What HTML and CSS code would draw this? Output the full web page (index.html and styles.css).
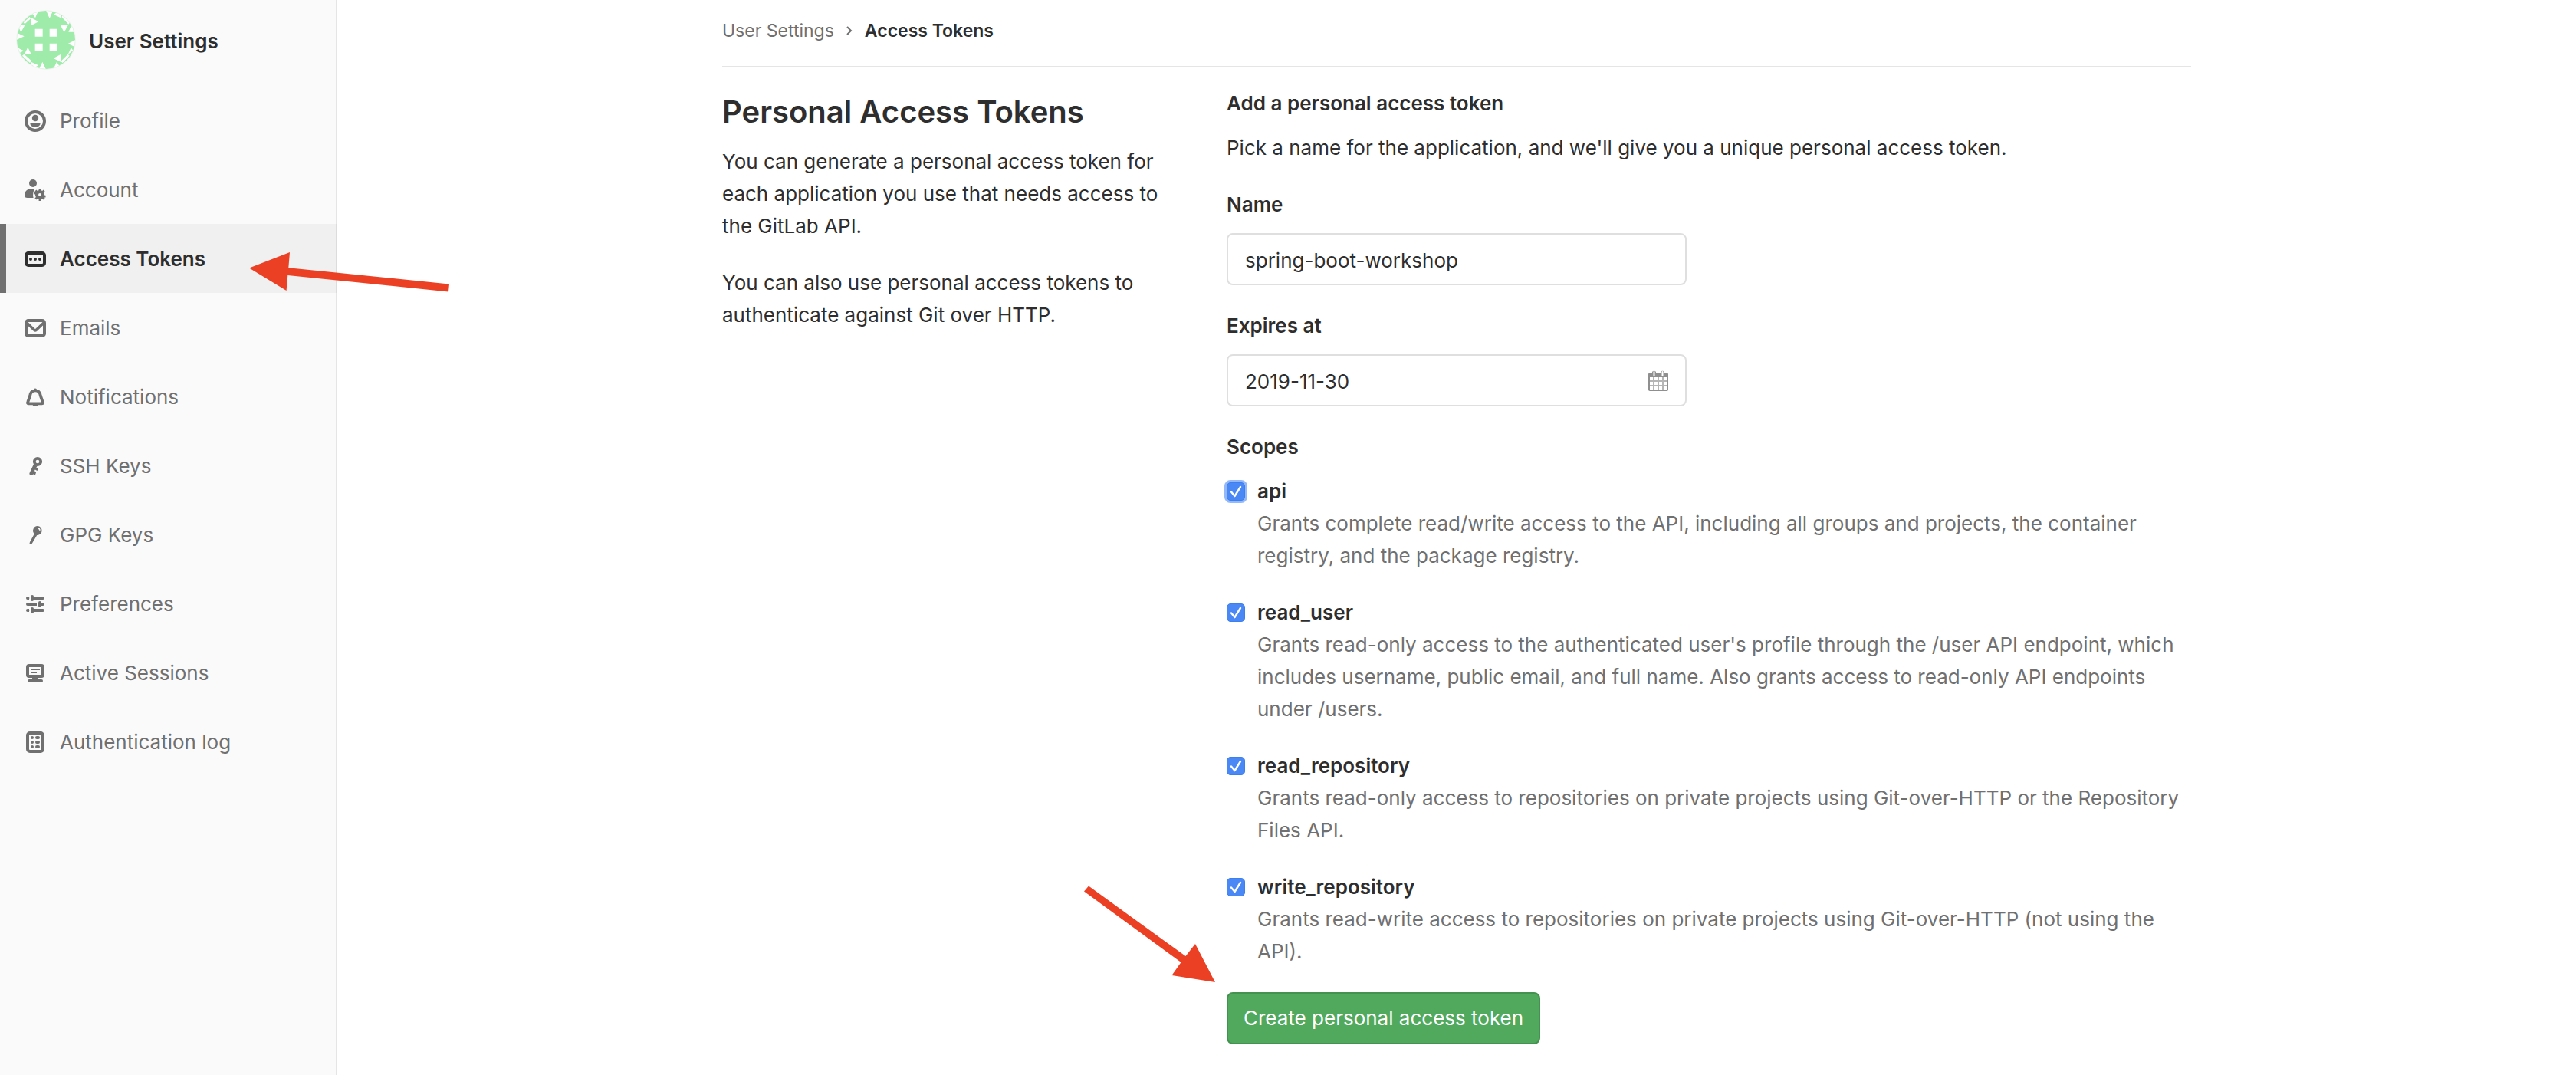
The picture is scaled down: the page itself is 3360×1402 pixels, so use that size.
FILE: index.html
```html
<!DOCTYPE html>
<html lang="en">
<head>
<meta charset="utf-8">
<meta name="viewport" content="width=device-width, initial-scale=1">
<title>Access Tokens · User Settings · GitLab</title>
<link rel="stylesheet" href="styles.css">
</head>
<body>
<div class="layout">
  <aside class="sidebar">
    <a class="sidebar-header" href="#">
      <svg class="avatar" viewBox="60 36 240 240" aria-hidden="true">
        <defs><clipPath id="avatar-clip"><circle cx="180" cy="156" r="114"/></clipPath></defs>
        <circle cx="180" cy="156" r="117" fill="#f2f2f2"/>
        <g clip-path="url(#avatar-clip)">
          <rect x="60" y="36" width="240" height="240" fill="#9eebaa"/>
          <g fill="#fff">
            <path d="M137 113h30v30h-30zM194 113h30v30h-30zM137 170h30v30h-30zM194 170h30v30h-30z"/>
            <path d="M180 40h28l-14 32zM126 52l26-14-14 32zM123 70l28 15-28 14zM237 99h29l-15 28zM64 127l31 15-31 14zM296 156l-30 15 30 14zM109 185l14 28H95zM237 213v29l-28-14zM152 272l14-30 14 30zM208 272l14-30 16 26z"/>
            <path d="M70 99h27l-15 28zM268 125l12-27 16 27zM64 184l29 15-29 14zM123 243l28 13-28 14zM209 56l29-15v29z"/>
            <path d="M92 88l24-22 5 6-24 22zM241 66l5-5 28 26-6 8zM87 218l7-6 29 26-6 8zM238 240l28-28 6 6-27 28zM266 213l12-26 8 10z"/>
          </g>
        </g>
      </svg>
      <span class="sidebar-title">User Settings</span>
    </a>
    <nav aria-label="User settings">
      <ul class="nav-list">
        <li class="nav-item"><a class="nav-link" href="#">
          <svg class="icon" viewBox="0 0 16 16"><circle cx="8" cy="8" r="6" fill="none" stroke="currentColor" stroke-width="2"/><circle cx="8" cy="6" r="2.1"/><path d="M4.6 9.8C5.300 9.200 6.600 9 8 9s2.700.2 3.400.8C11 11.200 9.600 12 8 12s-3-.8-3.400-2.200z"/></svg>
          <span>Profile</span></a></li>
        <li class="nav-item"><a class="nav-link" href="#">
          <svg class="icon" viewBox="0 0 16 16"><circle cx="6.500" cy="3.500" r="2.500"/><path d="M7.800 7.100C6.700 8.400 6.200 10.900 6.800 13H3c-1.400 0-2-.5-2-1.500C1 8.500 3 7 6 7c.7 0 1.300 0 1.800.1z"/><circle cx="11" cy="11" r="2" fill="none" stroke="currentColor" stroke-width="2"/><path d="M11 7v1.500M11 13.500V15M7.200 9.800l1.400.4M13.400 11.800l1.400.4M8.200 13.800l1-1M12.800 9.200l1-1M13.800 13.800l-1-1M9.200 9.200l-1-1" stroke="currentColor" stroke-width="1.400"/></svg>
          <span>Account</span></a></li>
        <li class="nav-item nav-item-active"><a class="nav-link" href="#" aria-current="page">
          <svg class="icon" viewBox="0 0 16 16"><rect x="2" y="4" width="12" height="8" rx="1.500" fill="none" stroke="currentColor" stroke-width="2"/><circle cx="5" cy="8" r="1"/><circle cx="8" cy="8" r="1"/><circle cx="11" cy="8" r="1"/></svg>
          <span>Access Tokens</span></a>
          <svg class="arrow arrow-nav" viewBox="325 329 261 52" aria-hidden="true"><path d="M325 349.500L378 329l-1.500 20 109.500 21-1 10-210-21z" fill="none"/><path d="M325 349.500L378 329l-1.700 20.200L586 370.500l-1 10L375.300 359l-1.700 20z"/></svg>
        </li>
        <li class="nav-item"><a class="nav-link" href="#">
          <svg class="icon" viewBox="0 0 16 16"><rect x="2" y="3" width="12" height="10" rx="1.500" fill="none" stroke="currentColor" stroke-width="2"/><path d="M2.500 4.500l4.800 4.600c.4.400 1 .4 1.400 0l4.800-4.600" fill="none" stroke="currentColor" stroke-width="1.800"/></svg>
          <span>Emails</span></a></li>
        <li class="nav-item"><a class="nav-link" href="#">
          <svg class="icon" viewBox="0 0 16 16"><path d="M8 3.700C6 3.700 4.900 5 4.600 7L3.200 11c-.4.900-.2 1.200.4 1.200h8.800c.6 0 .8-.3.4-1.200L11.400 7C11.100 5 10 3.700 8 3.700z" fill="none" stroke="currentColor" stroke-width="1.900"/><path d="M7 3.200a1 1 0 0 1 2 0zM6.300 13h3.400c-.3.700-.9 1-1.700 1s-1.400-.3-1.700-1z"/></svg>
          <span>Notifications</span></a></li>
        <li class="nav-item"><a class="nav-link" href="#">
          <svg class="icon" viewBox="0 0 16 16"><circle cx="9.500" cy="5" r="2.100" fill="none" stroke="currentColor" stroke-width="1.900"/><path d="M7 6.600l2.300 1.300-.6 1 .9.600c.5.300.4.700.2 1-.2.400-.6.500-1 .2l-.9-.5-.5.900.7.400c.4.200.5.600.3 1-.2.400-.2 1.200-.8 1.200-.5 0-.4-.5-.9-.5-.4 0-.3.500-.8.500H5c-.7 0-1-.6-.7-1.300z"/></svg>
          <span>SSH Keys</span></a></li>
        <li class="nav-item"><a class="nav-link" href="#">
          <svg class="icon" viewBox="0 0 16 16"><path fill-rule="evenodd" d="M9.500 2a3 3 0 1 1-.4 6L6 13.200c-.5.800-1.400 1-1.600.6-.2-.4-.1-1 .2-1.600l2.800-5.100A3 3 0 0 1 9.500 2zm.4 1.100l-.4.600c.8.200 1.100.6 1.200 1.300l.7-.2c0-.9-.6-1.600-1.500-1.700z"/></svg>
          <span>GPG Keys</span></a></li>
        <li class="nav-item"><a class="nav-link" href="#">
          <svg class="icon" viewBox="0 0 16 16"><path d="M3 4h.2M6 4h7M3 8h5M11 8h2M3 12h.2M6 12h7" stroke="currentColor" stroke-width="2" stroke-linecap="round"/><path d="M3 3h1v2H3zM7 7h2v2H7zM3 11h1v2H3z"/><path d="M6 3v2M11 7v2M6 11v2" stroke="currentColor" stroke-width="2" stroke-linecap="round"/></svg>
          <span>Preferences</span></a></li>
        <li class="nav-item"><a class="nav-link" href="#">
          <svg class="icon" viewBox="0 0 16 16"><rect x="3" y="3" width="10" height="7" rx="1" fill="none" stroke="currentColor" stroke-width="2"/><path d="M6 10.500h4V12h2a1 1 0 0 1 0 2H4a1 1 0 0 1 0-2h2z"/><path d="M5 5.500h6M5 7.500h4" stroke="currentColor"/></svg>
          <span>Active Sessions</span></a></li>
        <li class="nav-item"><a class="nav-link" href="#">
          <svg class="icon" viewBox="0 0 16 16"><rect x="3" y="2" width="10" height="12" rx="1.500" fill="none" stroke="currentColor" stroke-width="2"/><circle cx="6" cy="5" r="1"/><circle cx="6" cy="8" r="1"/><circle cx="6" cy="11" r="1"/><rect x="8" y="4" width="3" height="2" rx="1"/><rect x="8" y="7" width="3" height="2" rx="1"/><rect x="8" y="10" width="3" height="2" rx="1"/></svg>
          <span>Authentication log</span></a></li>
      </ul>
    </nav>
  </aside>

  <main class="content">
    <div class="container">
      <nav class="breadcrumbs" aria-label="Breadcrumb">
        <a class="breadcrumb-link" href="#">User Settings</a>
        <svg class="chevron" viewBox="0 0 8 12" aria-hidden="true"><path d="M1 1l5 5-5 5" fill="none" stroke="currentColor" stroke-width="2"/></svg>
        <a class="breadcrumb-current" href="#">Access Tokens</a>
      </nav>

      <div class="columns">
        <section class="intro">
          <h1 class="page-title">Personal Access Tokens</h1>
          <p class="intro-text">You can generate a personal access token for each application you use that needs access to the GitLab API.</p>
          <p class="intro-text">You can also use personal access tokens to authenticate against Git over HTTP.</p>
        </section>

        <form class="token-form">
          <div class="form-intro">
            <h2 class="form-title">Add a personal access token</h2>
            <p class="form-text">Pick a name for the application, and we'll give you a unique personal access token.</p>
          </div>

          <div class="field">
            <label class="field-label" for="token-name">Name</label>
            <div class="control"><input class="input" id="token-name" type="text" value="spring-boot-workshop"></div>
          </div>

          <div class="field">
            <label class="field-label" for="token-expires">Expires at</label>
            <div class="control">
              <input class="input" id="token-expires" type="text" value="2019-11-30">
              <svg class="calendar" viewBox="0 0 26 28" aria-hidden="true"><path fill="#8f8f8f" fill-rule="evenodd" d="M2 4h3V3a3 3 0 0 1 5 0v1h6V3a3 3 0 0 1 5 0v1h3a2 2 0 0 1 2 2v20a2 2 0 0 1-2 2H2a2 2 0 0 1-2-2V6a2 2 0 0 1 2-2zm4.500-1v5h2V3a1 1 0 0 0-2 0zm11 0v5h2V3a1 1 0 0 0-2 0zM2 10h22v16H2z"/><path stroke="#b5b5b5" stroke-width="2" d="M7 10v16M13 10v16M19 10v16M2 15h22M2 21h22"/></svg>
            </div>
          </div>

          <fieldset class="scopes">
            <legend class="field-label">Scopes</legend>
            <div class="scope-list">
              <div class="scope">
                <input class="checkbox checkbox-focused" type="checkbox" id="scope-api" checked>
                <label class="scope-name" for="scope-api">api</label>
                <p class="scope-text">Grants complete read/write access to the API, including all groups and projects, the container registry, and the package registry.</p>
              </div>
              <div class="scope">
                <input class="checkbox" type="checkbox" id="scope-read-user" checked>
                <label class="scope-name" for="scope-read-user">read_user</label>
                <p class="scope-text">Grants read-only access to the authenticated user's profile through the /user API endpoint, which includes username, public email, and full name. Also grants access to read-only API endpoints under /users.</p>
              </div>
              <div class="scope">
                <input class="checkbox" type="checkbox" id="scope-read-repository" checked>
                <label class="scope-name" for="scope-read-repository">read_repository</label>
                <p class="scope-text">Grants read-only access to repositories on private projects using Git-over-HTTP or the Repository Files API.</p>
              </div>
              <div class="scope">
                <input class="checkbox" type="checkbox" id="scope-write-repository" checked>
                <label class="scope-name" for="scope-write-repository">write_repository</label>
                <p class="scope-text">Grants read-write access to repositories on private projects using Git-over-HTTP (not using the API).</p>
              </div>
            </div>
          </fieldset>

          <div class="actions">
            <button class="button" type="submit">Create personal access token</button>
            <svg class="arrow arrow-submit" viewBox="1414 1155 171 126" aria-hidden="true"><path d="M1420 1155.500l126.500 91.500 12.500-16 26 50-56.500-9 12-17L1414 1162.500z"/></svg>
          </div>
        </form>
      </div>
    </div>
  </main>
</div>
</body>
</html>
```
FILE: styles.css
```css
:root {
  --text: #2e2e2e;
  --muted: #707070;
  --line: #e5e5e5;
  --control-line: #dfdfdf;
  --annotation: #ec4025;
}

*,
*::before,
*::after {
  box-sizing: border-box;
}

body {
  margin: 0;
  background: #fff;
  color: var(--text);
  font: 400 26px/42px Inter, "Liberation Sans", sans-serif;
}

h1,
h2,
p,
ul {
  margin: 0;
  padding: 0;
}

a {
  color: inherit;
  text-decoration: none;
}

.layout {
  display: flex;
  min-height: 100vh;
}

/* Sidebar */

.sidebar {
  flex: none;
  width: 440px;
  border-right: 2px solid var(--line);
  background: #fafafa;
}

.sidebar-header {
  display: flex;
  align-items: center;
  gap: 16px;
  padding: 12px 20px 20px;
}

.avatar {
  width: 80px;
  height: 80px;
}

.sidebar-title {
  padding-top: 4px;
  font-weight: 600;
}

.nav-list {
  list-style: none;
}

.nav-item {
  position: relative;
  color: var(--muted);
}

.nav-link {
  display: flex;
  align-items: center;
  gap: 16px;
  height: 90px;
  padding: 2px 30px 0;
}

.nav-item-active {
  margin-right: -2px;
  color: var(--text);
  font-weight: 600;
}

.nav-item-active .nav-link {
  padding-left: 22px;
  border-left: 8px solid var(--muted);
  background: rgba(0, 0, 0, 0.04);
}

.icon {
  flex: none;
  width: 32px;
  height: 32px;
  fill: currentColor;
}

/* Annotation arrows */

.arrow {
  position: absolute;
  fill: var(--annotation);
  pointer-events: none;
}

.arrow-nav {
  z-index: 1;
  top: 37px;
  left: 325px;
  width: 261px;
  height: 52px;
}

.arrow-submit {
  right: 100%;
  bottom: 81px;
  width: 171px;
  height: 126px;
  margin-right: 15px;
}

/* Content */

.content {
  flex: 1;
  min-width: 0;
}

.container {
  max-width: 1980px;
  margin: 0 auto;
  padding: 0 32px 40px;
}

.breadcrumbs {
  display: flex;
  align-items: center;
  gap: 16px;
  padding: 20px 0 26px;
  border-bottom: 2px solid var(--line);
  font-size: 23px;
  line-height: 40px;
}

.breadcrumb-link,
.chevron {
  color: var(--muted);
}

.chevron {
  width: 8px;
  height: 12px;
}

.breadcrumb-current {
  font-weight: 600;
}

.columns {
  display: flex;
  padding-top: 26px;
}

.intro {
  display: flex;
  flex: 0 1 658px;
  flex-direction: column;
  padding-right: 60px;
}

.page-title {
  margin-bottom: 12px;
  font-size: 40px;
  font-weight: 600;
  line-height: 64px;
}

.intro-text + .intro-text {
  margin-top: 32px;
}

/* Form */

.token-form {
  display: flex;
  flex: 1;
  flex-direction: column;
  gap: 32px;
  min-width: 0;
}

.form-intro,
.field {
  display: flex;
  flex-direction: column;
  gap: 16px;
}

.form-title {
  font-size: 26px;
  font-weight: 600;
  line-height: 42px;
}

.field-label {
  padding: 0;
  font-weight: 600;
}

.control {
  display: flex;
  align-items: center;
  width: 100%;
  max-width: 600px;
  height: 68px;
  padding: 0 22px;
  border: 2px solid var(--control-line);
  border-radius: 8px;
}

.input {
  flex: 1;
  min-width: 0;
  height: 64px;
  padding: 2px 0 0;
  border: 0;
  outline: 0;
  background: none;
  color: inherit;
  font: inherit;
}

.calendar {
  flex: none;
  width: 26px;
  height: 28px;
}

.scopes {
  min-width: 0;
  margin: 0;
  padding: 0;
  border: 0;
}

.scope-list {
  display: flex;
  flex-direction: column;
  gap: 32px;
  padding-top: 16px;
}

.scope {
  display: grid;
  grid-template-columns: 24px minmax(0, 1fr);
  align-items: center;
  column-gap: 16px;
}

.checkbox {
  width: 24px;
  height: 24px;
  margin: 0;
  appearance: none;
  border: 1px solid #3d7ff0;
  border-radius: 5px;
  background: #4a89f5;
}

.checkbox:checked {
  background-image: url("data:image/svg+xml,%3Csvg xmlns='http://www.w3.org/2000/svg' viewBox='0 0 22 22'%3E%3Cpath d='M5 11.500l4.500 5.500L17 5' fill='none' stroke='%23fff' stroke-width='2.400' stroke-linecap='round' stroke-linejoin='round'/%3E%3C/svg%3E");
}

.checkbox-focused {
  box-shadow: 0 0 0 3px #94b8f8;
}

.scope-name {
  justify-self: start;
  font-weight: 600;
}

.scope-text {
  grid-column: 2;
  color: var(--muted);
}

.actions {
  position: relative;
  align-self: flex-start;
}

.button {
  height: 68px;
  padding: 0 20px;
  border: 2px solid #44924f;
  border-radius: 8px;
  background: #51a95e;
  color: #fff;
  font: inherit;
}
```
